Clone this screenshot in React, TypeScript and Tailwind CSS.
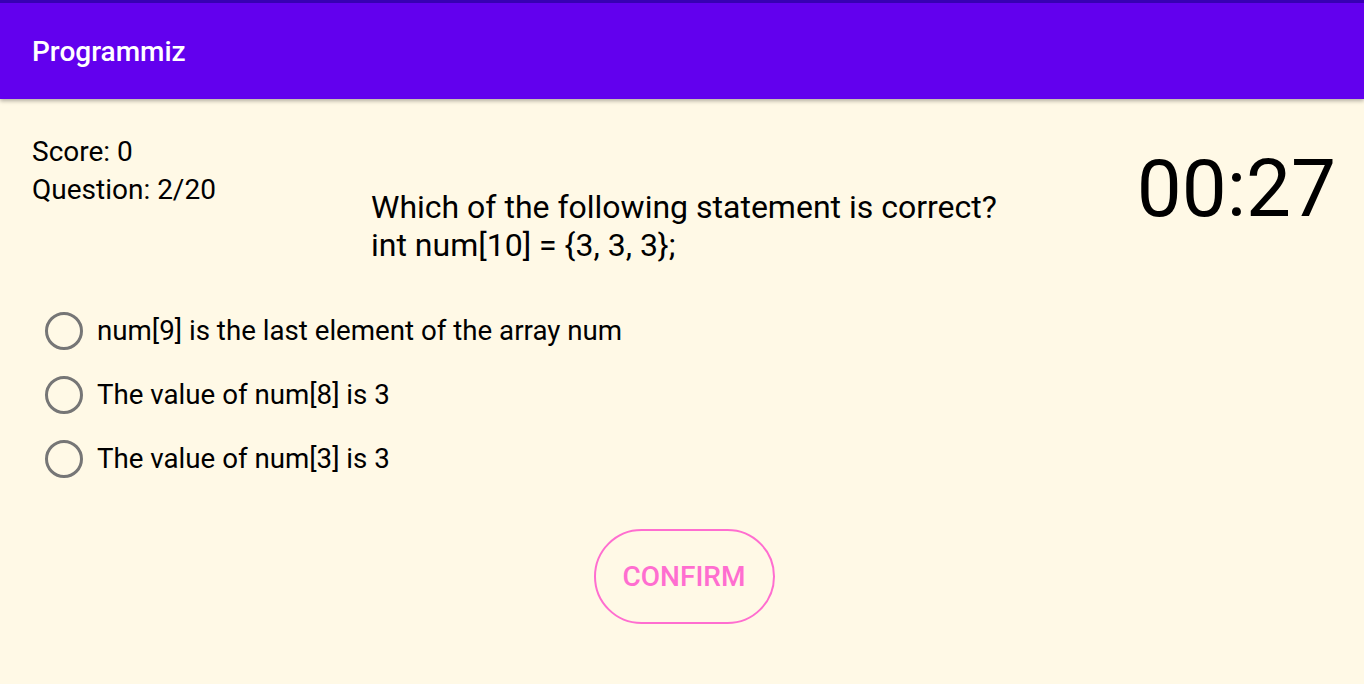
import React, { useState } from "react";

const options = [
  "num[9] is the last element of the array num",
  "The value of num[8] is 3",
  "The value of num[3] is 3",
];

export default function App() {
  const [picked, setPicked] = useState<number | null>(null);

  return (
    <div
      className="min-h-screen h-[684px] bg-[#fff9e6] text-black overflow-hidden"
      style={{ fontFamily: "Roboto, 'Liberation Sans', sans-serif" }}
    >
      {/* App bar */}
      <header className="h-[99px] bg-[#6200ee] border-t-[3px] border-[#3700b3] shadow-[0_2px_4px_rgba(0,0,0,0.3)] flex items-center px-8 pt-[2px]">
        <span className="text-white text-[28px] font-medium">Programmiz</span>
      </header>

      {/* Quiz */}
      <main>
        <div className="flex pt-[34px] pl-8 pr-[28px]">
          <div className="w-[339px] text-[28px] leading-[38px]">
            <div>Score: 0</div>
            <div>Question: 2/20</div>
          </div>
          <div className="mt-[55px] text-[32px] leading-[38px]">
            <div>Which of the following statement is correct?</div>
            <div>int num[10] = {"{3, 3, 3}"};</div>
          </div>
          <div className="flex-1" />
          <div className="mt-[16px] text-[80px] leading-[80px]">00:27</div>
        </div>

        <div className="mt-[35px] pl-[45px] flex flex-col">
          {options.map((o, i) => (
            <label
              key={o}
              className="h-16 flex items-center gap-[14px] text-[27.7px] cursor-pointer"
              onClick={() => setPicked(i)}
            >
              <span className="w-[38px] h-[38px] rounded-full border-[3px] border-[#767676] flex items-center justify-center">
                {picked === i && <span className="w-5 h-5 rounded-full bg-[#767676]" />}
              </span>
              <span>{o}</span>
            </label>
          ))}
        </div>

        <div className="mt-[38px] flex justify-center pl-1">
          <button className="w-[181px] h-[95px] rounded-full border-2 border-[#ff6ed0] text-[#ff6ed0] text-[28px] font-medium">
            CONFIRM
          </button>
        </div>
      </main>
    </div>
  );
}
